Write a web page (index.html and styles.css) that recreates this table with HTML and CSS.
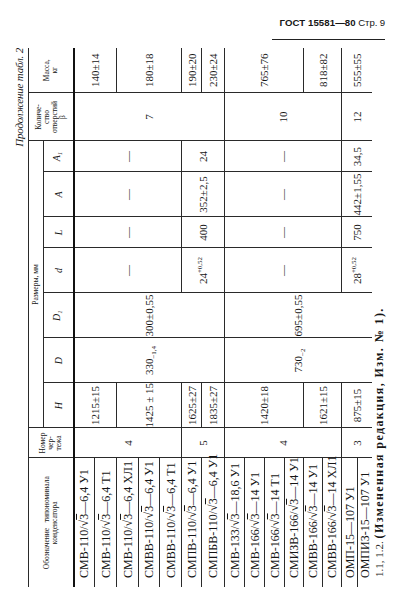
FILE: index.html
```html
<!DOCTYPE html>
<html lang="ru">
<head>
<meta charset="utf-8">
<title>ГОСТ 15581—80 Стр. 9</title>
<link rel="stylesheet" href="styles.css">
</head>
<body>
<div class="page">
  <header class="top">
    <div class="gost"><b>ГОСТ 15581—80</b> Стр. 9</div>
  </header>
  <div class="wrap">
    <div class="sheet">
      <div class="caption">Продолжение табл. 2</div>
      <table class="tbl">
        <colgroup>
          <col class="c-name"><col class="c-num"><col class="c-w"><col class="c-w"><col class="c-w"><col class="c-w"><col class="c-n"><col class="c-w"><col class="c-n"><col class="c-q"><col class="c-w">
        </colgroup>
        <thead>
          <tr class="hr1">
            <th rowspan="2" class="hd">Обозначение&nbsp;&nbsp; типономинала<br>конденсатора</th>
            <th rowspan="2" class="hd">Номер<br>чер-<br>тежа</th>
            <th colspan="7" class="hd size">Размеры, мм</th>
            <th rowspan="2" class="hd">Количе-<br>ство<br>отверстий<br>β</th>
            <th rowspan="2" class="hd">Масса,<br>кг</th>
          </tr>
          <tr class="hr2">
            <th class="sym">H</th>
            <th class="sym">D</th>
            <th class="sym">D<sub>1</sub></th>
            <th class="sym">d</th>
            <th class="sym">L</th>
            <th class="sym">A</th>
            <th class="sym">A<sub>1</sub></th>
          </tr>
        </thead>
        <tbody>
          <tr>
            <td class="nm">СМВ-110/√<span class="ov">3</span>—6,4 У1</td>
            <td rowspan="5">4</td>
            <td rowspan="2">1215±15</td>
            <td rowspan="7">330<sub>−1,4</sub></td>
            <td rowspan="7">300±0,55</td>
            <td rowspan="5">—</td>
            <td rowspan="5">—</td>
            <td rowspan="5">—</td>
            <td rowspan="5">—</td>
            <td rowspan="7">7</td>
            <td rowspan="2">140±14</td>
          </tr>
          <tr>
            <td class="nm">СМВ-110/√<span class="ov">3</span>—6,4 Т1</td>
          </tr>
          <tr>
            <td class="nm">СМВ-110/√<span class="ov">3</span>—6,4 ХЛ1</td>
            <td rowspan="3">1425 ± 15</td>
            <td rowspan="3">180±18</td>
          </tr>
          <tr>
            <td class="nm">СМВВ-110/√<span class="ov">3</span>—6,4 У1</td>
          </tr>
          <tr>
            <td class="nm">СМВВ-110/√<span class="ov">3</span>—6,4 Т1</td>
          </tr>
          <tr>
            <td class="nm">СМПВ-110/√<span class="ov">3</span>—6,4 У1</td>
            <td rowspan="2">5</td>
            <td>1625±27</td>
            <td rowspan="2">24<sup>+0,52</sup></td>
            <td rowspan="2">400</td>
            <td rowspan="2">352±2,5</td>
            <td rowspan="2">24</td>
            <td>190±20</td>
          </tr>
          <tr>
            <td class="nm">СМПБВ-110/√<span class="ov">3</span>—6,4 У1</td>
            <td>1835±27</td>
            <td>230±24</td>
          </tr>
          <tr>
            <td class="nm">СМВ-133/√<span class="ov">3</span>—18,6 У1</td>
            <td rowspan="6">4</td>
            <td rowspan="4">1420±18</td>
            <td rowspan="8">730<sub>−2</sub></td>
            <td rowspan="8">695±0,55</td>
            <td rowspan="6">—</td>
            <td rowspan="6">—</td>
            <td rowspan="6">—</td>
            <td rowspan="6">—</td>
            <td rowspan="6">10</td>
            <td rowspan="4">765±76</td>
          </tr>
          <tr>
            <td class="nm">СМВ-166/√<span class="ov">3</span>—14 У1</td>
          </tr>
          <tr>
            <td class="nm">СМВ-166/√<span class="ov">3</span>—14 Т1</td>
          </tr>
          <tr>
            <td class="nm">СМИЗВ-166/√<span class="ov">3</span>—14 У1</td>
          </tr>
          <tr>
            <td class="nm">СМВВ-166/√<span class="ov">3</span>—14 У1</td>
            <td rowspan="2">1621±15</td>
            <td rowspan="2">818±82</td>
          </tr>
          <tr>
            <td class="nm">СМВВ-166/√<span class="ov">3</span>—14 ХЛ1</td>
          </tr>
          <tr>
            <td class="nm">ОМП-15—107 У1</td>
            <td rowspan="2">3</td>
            <td rowspan="2">875±15</td>
            <td rowspan="2">28<sup>+0,52</sup></td>
            <td rowspan="2">750</td>
            <td rowspan="2">442±1,55</td>
            <td rowspan="2">34,5</td>
            <td rowspan="2">12</td>
            <td rowspan="2">555±55</td>
          </tr>
          <tr>
            <td class="nm">ОМПИЗ-15—107 У1</td>
          </tr>
        </tbody>
      </table>
      <p class="note">1.1, 1.2. <b>(Измененная редакция, Изм. № 1).</b></p>
    </div>
  </div>
</div>
</body>
</html>
```

FILE: styles.css
```css
* { box-sizing: border-box; }

html, body {
  margin: 0;
  padding: 0;
  background: #ffffff;
}

body {
  width: 414px;
  height: 610px;
  overflow: hidden;
  font-family: "Liberation Serif", "Times New Roman", serif;
  color: #161616;
}

.page {
  width: 414px;
  height: 610px;
  display: flex;
  flex-direction: column;
  overflow: hidden;
}

.top {
  flex: none;
  height: 40px;
  display: flex;
  justify-content: flex-end;
  padding: 17px 29px 0 0;
}

.gost {
  width: 113px;
  text-align: right;
  font-family: "Liberation Sans", Arial, sans-serif;
  font-size: 9.6px;
  line-height: 12px;
  letter-spacing: -0.1px;
  padding-bottom: 4px;
  border-bottom: 1.5px solid #222;
  white-space: nowrap;
}

.gost b { font-weight: bold; letter-spacing: 0.1px; }

.wrap {
  flex: none;
  width: 414px;
  height: 570px;
  overflow: hidden;
}

.sheet {
  width: 570px;
  height: 414px;
  transform-origin: 0 0;
  transform: translateY(570px) rotate(-90deg);
  padding: 11px 0 0 23px;
}

.caption {
  width: 539px;
  text-align: right;
  font-style: italic;
  font-size: 11px;
  line-height: 17px;
  letter-spacing: -0.2px;
}

.tbl {
  width: 539px;
  table-layout: fixed;
  border-collapse: collapse;
  border-top: 1.5px solid #222;
  border-left: hidden;
  border-right: hidden;
  border-bottom: hidden;
}

.c-name { width: 129px; }
.c-num { width: 30px; }
.c-w { width: 45px; }
.c-n { width: 31px; }
.c-q { width: 48px; }

.tbl th,
.tbl td {
  border: 1px solid #2a2a2a;
  padding: 0;
  text-align: center;
  vertical-align: middle;
  font-weight: normal;
}

.tbl th.hd {
  font-size: 7.5px;
  line-height: 8px;
  border-bottom: 2px solid #111;
}

.tbl th.size {
  border-bottom: 1px solid #2a2a2a;
}

.tbl th.sym {
  font-style: italic;
  font-size: 10px;
  line-height: 11px;
  border-bottom: 2px solid #111;
}

.sym sub { font-size: 7px; vertical-align: -2px; }

.hr1 { height: 15px; }
.hr2 { height: 30px; }

.tbl td {
  font-size: 11px;
  line-height: 12px;
  white-space: nowrap;
}

.tbl td sub,
.tbl td sup {
  font-size: 7px;
  line-height: 0;
}

.tbl td.nm {
  text-align: left;
  padding-left: 9px;
  font-size: 12px;
}

.ov { text-decoration: overline; }

.tbl tbody tr { height: 20px; }
.tbl tbody tr:nth-child(1) { height: 21px; }
.tbl tbody tr:nth-child(2) { height: 22px; }
.tbl tbody tr:nth-child(3) { height: 22px; }
.tbl tbody tr:nth-child(4) { height: 21px; }
.tbl tbody tr:nth-child(5) { height: 22px; }
.tbl tbody tr:nth-child(6) { height: 20px; }
.tbl tbody tr:nth-child(7) { height: 23px; }
.tbl tbody tr:nth-child(8) { height: 20px; }
.tbl tbody tr:nth-child(9) { height: 20px; }
.tbl tbody tr:nth-child(10) { height: 20px; }
.tbl tbody tr:nth-child(11) { height: 19px; }
.tbl tbody tr:nth-child(12) { height: 19px; }
.tbl tbody tr:nth-child(13) { height: 19px; }
.tbl tbody tr:nth-child(14) { height: 16px; }
.tbl tbody tr:nth-child(15) { height: 14px; }

.note {
  margin: -2px 0 0 0;
  padding-left: 10px;
  font-size: 11px;
  line-height: 18px;
  white-space: nowrap;
}

.note b {
  font-size: 12px;
  font-weight: bold;
  letter-spacing: 1.4px;
}
```
